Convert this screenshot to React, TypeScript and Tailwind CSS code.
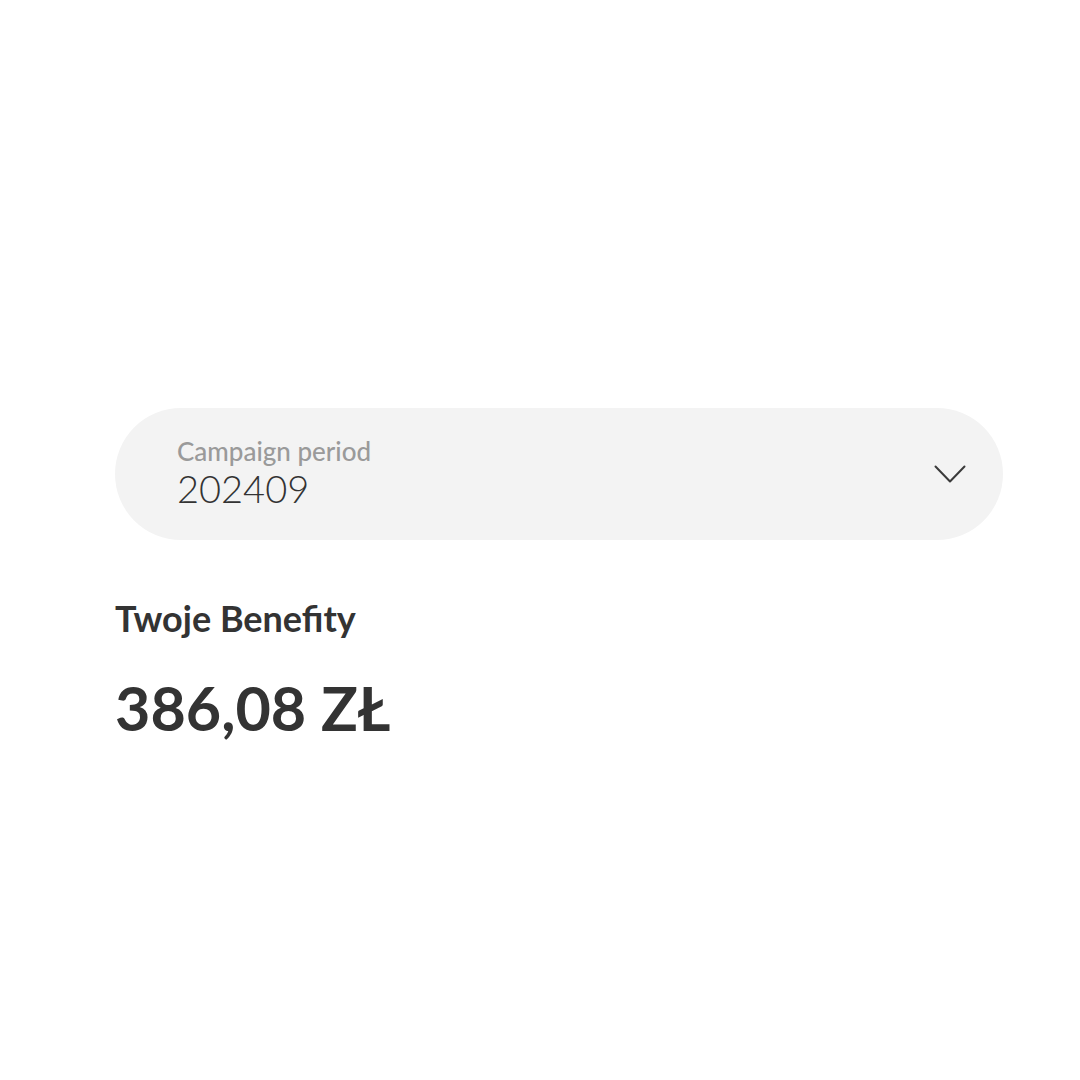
import React from "react";

export default function App() {
  return (
    <div className="w-[1080px] h-[1080px] bg-white pt-[408px] pl-[115px]" style={{ fontFamily: "Lato, 'Open Sans', sans-serif" }}>
      <div className="w-[888px] h-[132px] rounded-full bg-[#f3f3f3] flex items-center justify-between pl-[62px] pr-[36px]">
        <div className="flex flex-col -mt-[2px]">
          <span className="text-[26px] leading-[30px] text-[#9a9a9a] font-medium">Campaign period</span>
          <span className="text-[38px] leading-[44px] text-[#333333] font-light">202409</span>
        </div>
        <svg width="32" height="19" viewBox="0 0 32 19" fill="none" className="mr-[1px]">
          <path d="M1.5 1.5 L16 16.5 L30.5 1.5" stroke="#3a3a3a" strokeWidth="2" strokeLinecap="round" strokeLinejoin="round" />
        </svg>
      </div>
      <div className="mt-[56px] text-[36px] leading-[44px] font-bold text-[#333333]">Twoje Benefity</div>
      <div className="mt-[32px] text-[61px] leading-[72px] font-bold text-[#333333]">386,08 ZŁ</div>
    </div>
  );
}
